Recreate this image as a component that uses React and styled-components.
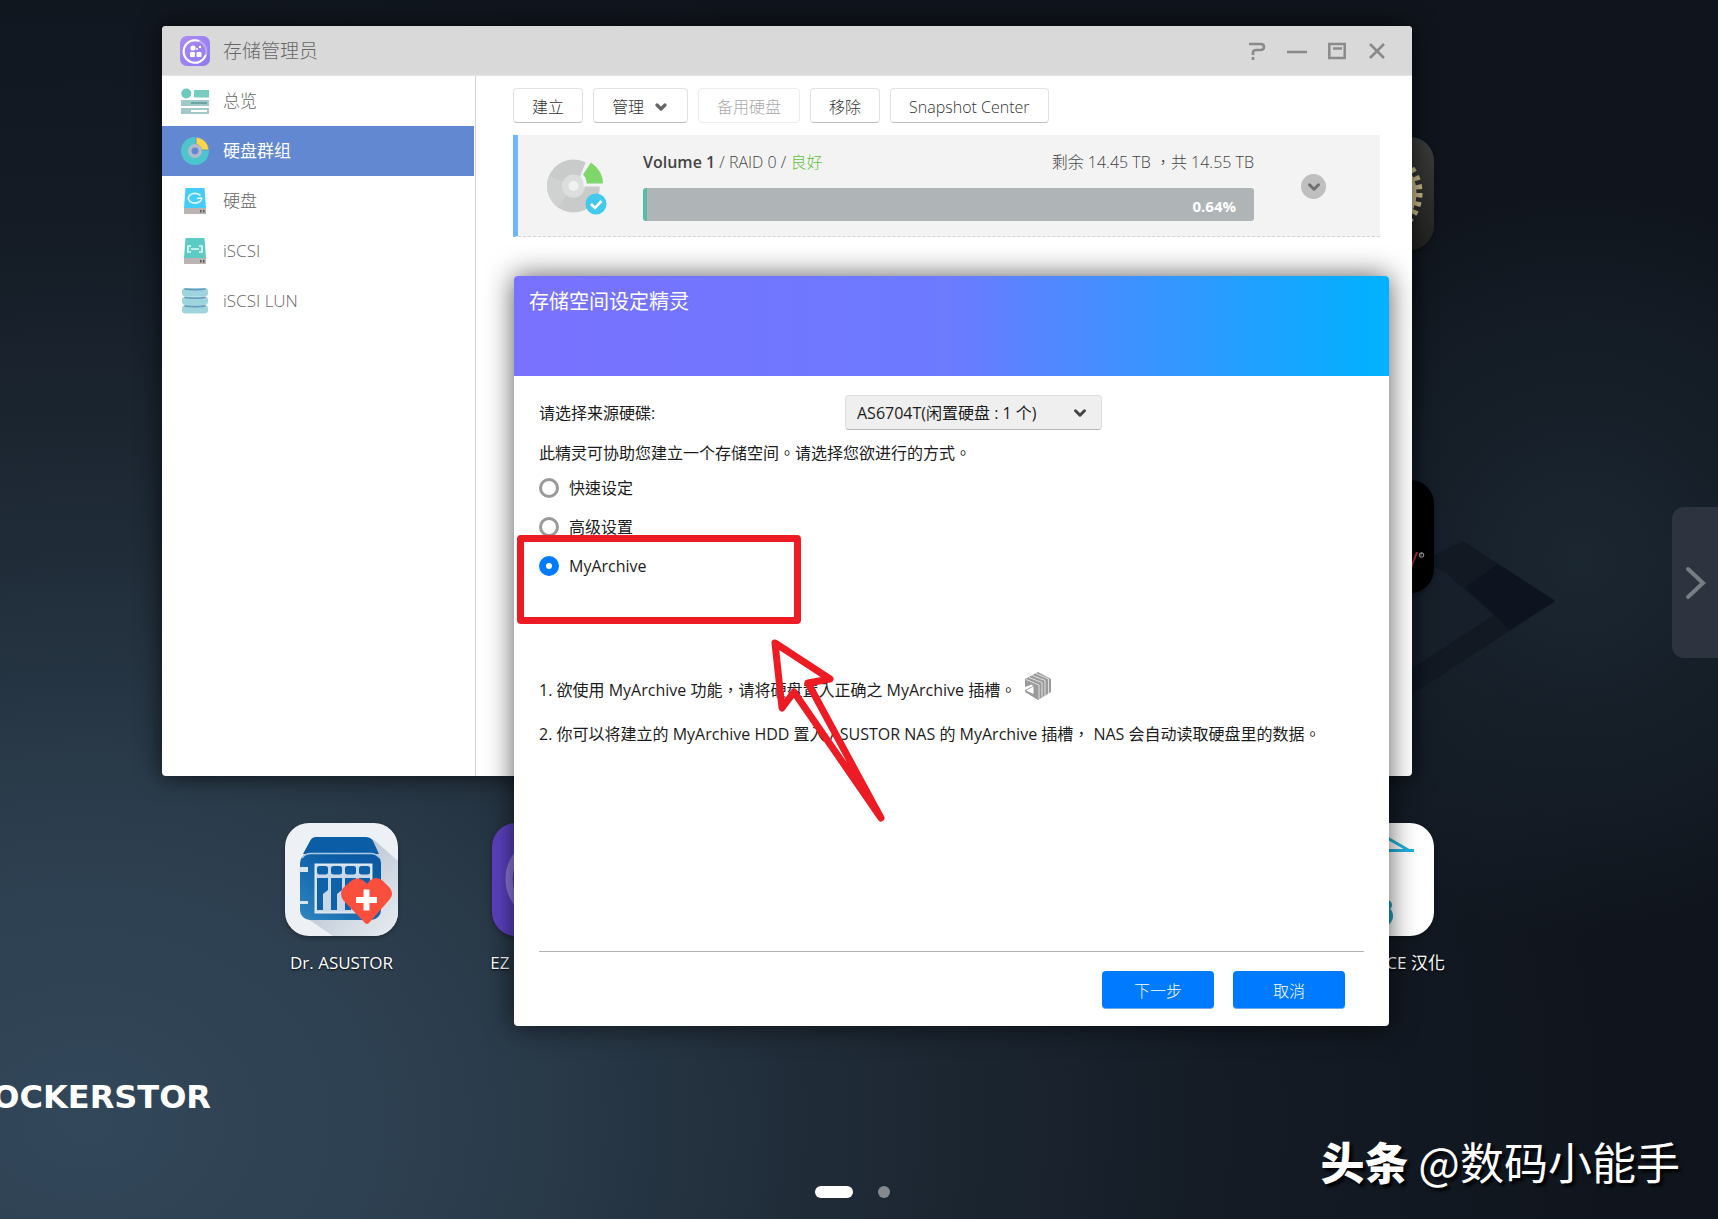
import { useState } from 'react'
import styled, { ThemeProvider, createGlobalStyle, css } from 'styled-components'
import { ChevronDown } from 'lucide-react'

const theme = {
    colors: {
        text: '#1c1c1c',
        muted: '#666',
        line: '#d4d4d4',
        panel: '#f3f3f3',
        active: '#6188d1',
        primary: '#007aff',
        good: '#62c33c',
        mark: '#ed1c24',
    },
    font: '"Open Sans", "Noto Sans CJK TC", sans-serif',
}

const GlobalStyle = createGlobalStyle`
    * {
        box-sizing: border-box;
    }

    body {
        margin: 0;
        font-family: ${({ theme }) => theme.font};
        font-size: 16px;
        line-height: 20px;
        color: ${({ theme }) => theme.colors.text};
    }

    button, select, input {
        font: inherit;
        margin: 0;
    }

    svg {
        display: block;
        flex: none;
    }
`

/* ---------- icons ---------- */

const AppLogo = () => (
    <svg width="30" height="30" viewBox="0 0 30 30">
        <defs>
            <linearGradient id="logoBg" x1="0" y1="0" x2="1" y2="1">
                <stop offset="0" stopColor="#a98cf2" />
                <stop offset="1" stopColor="#9179ee" />
            </linearGradient>
        </defs>
        <rect width="30" height="30" rx="7" fill="url(#logoBg)" />
        <circle cx="15" cy="15.500" r="11.300" fill="none" stroke="#bda9f8" strokeWidth="2" />
        <path d="M18.500 4.800A11.300 11.300 0 1 0 25.500 19.500" fill="none" stroke="#fff" strokeWidth="2" strokeLinecap="round" />
        <rect x="10" y="16" width="5" height="5" rx="1" fill="#fff" />
        <rect x="16.500" y="16" width="5" height="5" rx="1" fill="#fff" />
        <circle cx="13" cy="12" r="2.600" fill="#fff" />
        <circle cx="20" cy="11" r="1.200" fill="#fff" />
        <circle cx="17" cy="13" r="1" fill="#fff" />
    </svg>
)

const OverviewIcon = () => (
    <svg width="28" height="28" viewBox="0 0 28 28">
        <circle cx="5.300" cy="6.500" r="5" fill="#6cc9bb" />
        <rect x="13" y="3" width="15" height="7.500" fill="#76cdc0" />
        <rect x="0" y="13" width="28" height="6" fill="#a3c8c9" />
        <rect x="10" y="15" width="16" height="2" fill="#6ba5a3" />
        <rect x="0" y="21" width="28" height="6" fill="#a3c8c9" />
        <rect x="10" y="23" width="16" height="2" fill="#fff" />
    </svg>
)

const GroupIcon = () => (
    <svg width="28" height="28" viewBox="0 0 28 28">
        <circle cx="14" cy="14" r="9.800" fill="none" stroke="#4cc5cd" strokeWidth="8.400" />
        <path d="M15 0A14 14 0 0 1 28 13H20.500A7 7 0 0 0 15 7.200Z" fill="#ffd54a" stroke="#6188d1" strokeWidth="0.800" />
        <circle cx="14" cy="14" r="5.200" fill="none" stroke="#b3bacb" strokeWidth="3.600" />
    </svg>
)

const DiskIcon = ({ iscsi }) => (
    <svg width="28" height="28" viewBox="0 0 28 28">
        <path d="M4.500 1H23.500L25 21H3Z" fill={iscsi ? '#5bcbc4' : '#45cdf7'} />
        <rect x="3" y="21" width="22" height="6" fill="#b9b4b2" />
        <rect x="19" y="23" width="1.500" height="2.500" fill="#555" />
        <rect x="22" y="23" width="1.500" height="2.500" fill="#555" />
        {iscsi
            ? <path d="M10 9H7V15H10M18 9H21V15H18M10 12H18" fill="none" stroke="#e2fbf8" strokeWidth="1.700" />
            : <path d="M19.500 8.500A6.700 4.800 0 1 0 20.500 12.500V11L16 11.500" fill="none" stroke="#dff6ff" strokeWidth="1.700" />}
    </svg>
)

const LunIcon = () => (
    <svg width="28" height="28" viewBox="0 0 28 28">
        {[1, 9.500, 18].map((y) => (
            <g key={y}>
                <rect x="1" y={y} width="26" height="8.500" rx="3.500" fill="#9dd4dd" />
                <path d={`M3.500 ${y + 1}Q14 ${y + 2.500} 24.500 ${y + 1}`} fill="none" stroke="#6499bb" strokeWidth="1.600" />
            </g>
        ))}
    </svg>
)

const VolumeIcon = () => (
    <svg width="60" height="56" viewBox="0 0 60 56">
        <circle cx="26.500" cy="27" r="26.500" fill="#c9cbca" />
        <path d="M26.500 27L11 48.500A26.500 26.500 0 0 1 2 17Z" fill="#d0d2d1" />
        <circle cx="26.500" cy="27" r="11.500" fill="#dcdddd" />
        <circle cx="26.500" cy="27" r="5" fill="#f1f1f1" />
        <path d="M40 0L60 0V27.500H36.500Q37 21 33 17.500Z" fill="#f3f3f3" />
        <path d="M44 3.500Q56 12 56 24.500H39.500Q40 20 36 15.500Z" fill="#7fd76b" />
        <circle cx="49" cy="45" r="10.500" fill="#43c8ee" />
        <path d="M44 45L48 49L54.500 42" fill="none" stroke="#fff" strokeWidth="2.600" />
    </svg>
)

const SlotIcon = () => (
    <svg width="28" height="28" viewBox="0 0 28 28">
        <path d="M1 7L14 0L27 7V20L14 28L1 20L1 18L9 14L8 12.500L1 15Z" fill="#9b9b9b" />
        <path d="M2 7.500L15 13V27M5 5.500L18 10.500V25M8.500 3.500L21 8.500V23.500M12 1.500L24.500 7V22" fill="none" stroke="#e9e9e9" strokeWidth="0.900" />
        <path d="M2 18.500L9.500 14.500V22Z" fill="#fff" />
    </svg>
)

const NasIcon = () => (
    <svg width="113" height="113" viewBox="0 0 113 113">
        <defs>
            <linearGradient id="nasBody" x1="0" y1="1" x2="1" y2="0">
                <stop offset="0" stopColor="#2f86bf" />
                <stop offset="0.600" stopColor="#0d5fa8" />
                <stop offset="1" stopColor="#0a58a0" />
            </linearGradient>
            <linearGradient id="nasShade" x1="0" y1="0" x2="1" y2="1">
                <stop offset="0.300" stopColor="#b9c5d3" />
                <stop offset="1" stopColor="#e9edf2" />
            </linearGradient>
        </defs>
        <path d="M88 16L113 38V113H48L20 94Z" fill="url(#nasShade)" />
        <path d="M25 18Q27 14 31 14H80Q86 14 88 18L94 31H18Z" fill="#0b5ea6" />
        <rect x="15" y="30" width="81" height="67" rx="10" fill="url(#nasBody)" />
        <path d="M17 35Q20 30.500 26 30.500H86Q91 30.500 95 35" fill="none" stroke="#a9c9e2" strokeWidth="1.600" />
        <rect x="14" y="44" width="9" height="5" fill="#dbe5ee" />
        <rect x="14" y="78" width="9" height="3" fill="#dbe5ee" />
        <rect x="30.500" y="41.500" width="56" height="48" fill="#c9d8e6" stroke="#dfe8f0" strokeWidth="2" />
        {[32, 46, 60, 74].map((x) => (
            <g key={x} fill="#0f62aa">
                <rect x={x} y="43" width="11" height="8.500" rx="2.500" />
                <path d={`M${x} 55H${x + 11}V67L${x + 6} 71V87H${x}Z`} />
            </g>
        ))}
        <path d="M82 61Q86 55 91 55Q95 55 98 58L105 65Q109 71 105 76L84 100Q82 102 80 100L58 77Q54 71 58 65L66 58Q74 52 82 61Z" fill="#fb4f3d" />
        <path d="M81.500 66.500V87.500M71 77H92" stroke="#fff" strokeWidth="6" />
    </svg>
)

const GearIcon = () => (
    <svg width="113" height="113" viewBox="0 0 113 113">
        <circle cx="56" cy="56" r="42" fill="none" stroke="#cdbf91" strokeWidth="7" strokeDasharray="4.400 4.400" />
        <circle cx="56" cy="56" r="35" fill="none" stroke="#cdbf91" strokeWidth="9" />
    </svg>
)

const ArchiveDiskIcon = () => (
    <svg width="113" height="113" viewBox="0 0 113 113">
        <circle cx="56" cy="56" r="39" fill="none" stroke="#8e79da" strokeWidth="7" />
    </svg>
)

const HangerIcon = () => (
    <svg width="113" height="113" viewBox="0 0 113 113">
        <path d="M56 9L88 27.500H25Z" fill="none" stroke="#22b1da" strokeWidth="3" />
        <path d="M84 27.500H93" stroke="#22b1da" strokeWidth="3" />
        <circle cx="66" cy="82" r="5" fill="#1f9dc0" />
        <circle cx="61" cy="93" r="11" fill="#1f9dc0" />
    </svg>
)

const SlashIcon = () => (
    <svg width="113" height="113" viewBox="0 0 113 113">
        <path d="M89 90L96 72" stroke="#d13545" strokeWidth="2" />
        <circle cx="100.500" cy="75" r="2.300" fill="none" stroke="#bbb" />
        <path d="M100 76.500V73.500H101" fill="none" stroke="#bbb" strokeWidth="0.800" />
    </svg>
)

const HelpGlyph = () => (
    <svg width="18" height="18" viewBox="0 0 18 18" fill="none" stroke="#8a8a8a" strokeWidth="2.600">
        <path d="M1 2H12.500Q16 2 16 5Q16 8 12.500 8H8Q5 8 5 10.500V13M5 15V18" />
    </svg>
)

const MinGlyph = () => (
    <svg width="22" height="18" viewBox="0 0 22 18" stroke="#8a8a8a" strokeWidth="2.600">
        <path d="M1 10H21" />
    </svg>
)

const MaxGlyph = () => (
    <svg width="18" height="18" viewBox="0 0 18 18" fill="none" stroke="#8a8a8a" strokeWidth="2.500">
        <path d="M1.300 2H16.700V16H1.300ZM5 6.500H14" />
    </svg>
)

const CloseGlyph = () => (
    <svg width="18" height="18" viewBox="0 0 18 18" stroke="#8a8a8a" strokeWidth="2.600">
        <path d="M2 2L16 16M16 2L2 16" />
    </svg>
)

const NextGlyph = () => (
    <svg width="22" height="34" viewBox="0 0 22 34" fill="none" stroke="#787c84" strokeWidth="4" strokeLinecap="round">
        <path d="M4 3L19 17L4 31" />
    </svg>
)

/* ---------- data ---------- */

const menu = [
    { label: '总览', icon: <OverviewIcon /> },
    { label: '硬盘群组', icon: <GroupIcon /> },
    { label: '硬盘', icon: <DiskIcon /> },
    { label: 'iSCSI', icon: <DiskIcon iscsi /> },
    { label: 'iSCSI LUN', icon: <LunIcon /> },
]

const shortcuts = [
    { col: 6, row: 1, bg: 'linear-gradient(#3c3d3b, #222321)', icon: <GearIcon /> },
    { col: 6, row: 2, bg: '#000', icon: <SlashIcon /> },
    { col: 1, row: 3, bg: '#edf0f5', icon: <NasIcon />, label: 'Dr. ASUSTOR' },
    { col: 2, row: 3, bg: '#5b41c0', icon: <ArchiveDiskIcon />, label: 'EZ', align: 'flex-start' },
    { col: 6, row: 3, bg: '#fff', icon: <HangerIcon />, label: 'CE 汉化', align: 'flex-end' },
]

const modes = ['快速设定', '高级设置', 'MyArchive']

/* ---------- app ---------- */

const StorageManager = () => {
    const [current, setCurrent] = useState('硬盘群组')

    return (
        <ManagerWindow>
            <TitleBar>
                <AppLogo />
                <h1>存储管理员</h1>
                <WindowButton aria-label="帮助"><HelpGlyph /></WindowButton>
                <WindowButton aria-label="最小化"><MinGlyph /></WindowButton>
                <WindowButton aria-label="最大化"><MaxGlyph /></WindowButton>
                <WindowButton aria-label="关闭"><CloseGlyph /></WindowButton>
            </TitleBar>
            <ManagerBody>
                <Sidebar>
                    {menu.map((item) => (
                        <MenuItem key={item.label} $active={item.label === current} onClick={() => setCurrent(item.label)}>
                            {item.icon}
                            {item.label}
                        </MenuItem>
                    ))}
                </Sidebar>
                <Main>
                    <Toolbar>
                        <ToolButton>建立</ToolButton>
                        <ToolButton>管理 <ChevronDown size={16} strokeWidth={5} color="#666" /></ToolButton>
                        <ToolButton disabled>备用硬盘</ToolButton>
                        <ToolButton>移除</ToolButton>
                        <ToolButton>Snapshot Center</ToolButton>
                    </Toolbar>
                    <Volume>
                        <VolumeIcon />
                        <VolumeInfo>
                            <VolumeHead>
                                <span><b>Volume 1</b> / RAID 0 / <em>良好</em></span>
                                <span>剩余 14.45 TB ，共 14.55 TB</span>
                            </VolumeHead>
                            <UsageBar>0.64%</UsageBar>
                        </VolumeInfo>
                        <ExpandButton aria-label="展开"><ChevronDown size={18} strokeWidth={4} /></ExpandButton>
                    </Volume>
                </Main>
            </ManagerBody>
        </ManagerWindow>
    )
}

const Wizard = () => {
    const [mode, setMode] = useState('MyArchive')

    return (
        <WizardWindow>
            <WizardHead>存储空间设定精灵</WizardHead>
            <WizardBody>
                <SourceRow>
                    <label htmlFor="source">请选择来源硬碟:</label>
                    <SelectBox>
                        <select id="source">
                            <option>AS6704T(闲置硬盘 : 1 个)</option>
                        </select>
                        <ChevronDown size={18} strokeWidth={4} />
                    </SelectBox>
                </SourceRow>
                <Intro>此精灵可协助您建立一个存储空间。请选择您欲进行的方式。</Intro>
                <Modes>
                    {modes.map((name) => (
                        <ModeLabel key={name}>
                            <input type="radio" name="mode" checked={mode === name} onChange={() => setMode(name)} />
                            {name}
                        </ModeLabel>
                    ))}
                </Modes>
                <Notes>
                    <li>1. 欲使用 MyArchive 功能，请将硬盘置入正确之 MyArchive 插槽。<SlotIcon /></li>
                    <li>2. 你可以将建立的 MyArchive HDD 置入 ASUSTOR NAS 的 MyArchive 插槽， NAS 会自动读取硬盘里的数据。</li>
                </Notes>
                <WizardFoot>
                    <PrimaryButton>下一步</PrimaryButton>
                    <PrimaryButton>取消</PrimaryButton>
                </WizardFoot>
            </WizardBody>
            <MarkBox />
            <MarkArrow width="120" height="190" viewBox="0 0 120 190">
                <path d="M10 9L65 45L43 49L116 184L29 58L17 74Z" />
            </MarkArrow>
        </WizardWindow>
    )
}

const App = () => {
    return (
        <ThemeProvider theme={theme}>
            <GlobalStyle />
            <Desktop>
                <Wallpaper viewBox="0 0 360 240" width="360" height="240">
                    <path d="M0 40L70 -6L195 74L74 153L0 190Z" fill="#17202a" />
                    <path d="M103 14L195 74L74 153L0 198V175L134 88L86 46L62 34Z" fill="#121923" />
                    <path d="M138 37L195 74L150 103L105 60Z" fill="#0d141f" />
                </Wallpaper>
                <Shortcuts>
                    {shortcuts.map((s) => (
                        <Shortcut key={`${s.col}-${s.row}`} $col={s.col} $row={s.row} $bg={s.bg} $align={s.align}>
                            <i>{s.icon}</i>
                            <span>{s.label}</span>
                        </Shortcut>
                    ))}
                </Shortcuts>
                <BottomBar>
                    <Brand>OCKERSTOR</Brand>
                    <Credit><b>头条</b> @数码小能手</Credit>
                </BottomBar>
                <Pager>
                    <PageDot $current aria-label="1" />
                    <PageDot aria-label="2" />
                </Pager>
                <StorageManager />
                <Wizard />
                <NextPage aria-label="下一页"><NextGlyph /></NextPage>
            </Desktop>
        </ThemeProvider>
    )
}

/* ---------- desktop ---------- */

const Desktop = styled.div`
    position: relative;
    display: flex;
    flex-direction: column;
    min-height: 100vh;
    overflow: hidden;
    background:
        radial-gradient(circle at 92% 46%, rgba(34, 50, 62, 0.6), transparent 22%),
        radial-gradient(ellipse 90% 100% at 5% 92%, #32475a 0%, #2c3e4e 24%, #1f2b37 48%, #141b25 74%, #10151d 100%);
`

const Wallpaper = styled.svg`
    position: absolute;
    top: 527px;
    left: 1360px;
`

const Shortcuts = styled.div`
    position: relative;
    display: grid;
    grid-template-columns: repeat(6, 113px);
    grid-template-rows: repeat(3, 153px);
    justify-content: space-between;
    row-gap: 190px;
    padding: 137px 284px 0 285px;
`

const Shortcut = styled.a.attrs({ href: '#' })`
    grid-column: ${({ $col }) => $col};
    grid-row: ${({ $row }) => $row};
    display: flex;
    flex-direction: column;
    align-items: ${({ $align }) => $align || 'center'};
    gap: 17px;
    color: #fff;
    font-size: 17px;
    text-decoration: none;
    white-space: nowrap;
    text-shadow: 0 1px 2px #000;

    i {
        overflow: hidden;
        height: 113px;
        flex: none;
        border-radius: 24px;
        background: ${({ $bg }) => $bg};
        box-shadow: 0 2px 5px rgba(0, 0, 0, 0.3);
    }

    span {
        margin: 0 ${({ $align }) => ($align === 'flex-end' ? '-11px' : '-2px')};
    }
`

const BottomBar = styled.div`
    display: flex;
    justify-content: space-between;
    margin-top: auto;
    padding: 0 38px 28px 0;
    color: #fff;
`

const Brand = styled.div`
    display: flex;
    justify-content: flex-end;
    width: 211px;
    font: bold 32px/32px "DejaVu Sans", sans-serif;
`

const Credit = styled.div`
    padding-top: 50px;
    font-size: 44px;
    line-height: 60px;
    white-space: nowrap;
    text-shadow: 3px 3px 3px #000;
    font-family: "Noto Sans CJK SC", sans-serif;

    b {
        font-weight: 900;
    }
`

const Pager = styled.nav`
    position: absolute;
    right: 0;
    bottom: 21px;
    left: 0;
    display: flex;
    justify-content: center;
    gap: 25px;
    padding-right: 13px;
`

const PageDot = styled.button`
    width: ${({ $current }) => ($current ? 38 : 12)}px;
    height: 12px;
    padding: 0;
    border: 0;
    border-radius: 6px;
    background: ${({ $current }) => ($current ? '#fff' : '#85888c')};
`

const NextPage = styled.button`
    position: absolute;
    top: 507px;
    right: 0;
    display: flex;
    align-items: center;
    justify-content: center;
    width: 46px;
    height: 151px;
    padding: 0;
    border: 0;
    border-radius: 12px 0 0 12px;
    background: #2e343f;
`

/* ---------- storage manager ---------- */

const windowFrame = css`
    position: absolute;
    display: flex;
    flex-direction: column;
    min-height: 750px;
    border-radius: 4px;
    background: #fff;
    overflow: hidden;
`

const ManagerWindow = styled.section`
    ${windowFrame}
    top: 26px;
    right: 306px;
    left: 162px;
    box-shadow: 0 0 24px rgba(0, 0, 0, 0.7);
`

const TitleBar = styled.header`
    display: flex;
    align-items: center;
    height: 50px;
    padding: 0 20px 0 18px;
    border-bottom: 1px solid #e4e4e4;
    background: #d9d9d9;

    h1 {
        flex: 1;
        margin: 0 0 0 13px;
        color: ${({ theme }) => theme.colors.muted};
        font-size: 19px;
        font-weight: 300;
    }
`

const WindowButton = styled.button`
    display: flex;
    align-items: center;
    justify-content: center;
    width: 30px;
    height: 30px;
    margin-left: 10px;
    padding: 0;
    border: 0;
    background: none;
`

const ManagerBody = styled.div`
    display: flex;
    flex: 1;
`

const Sidebar = styled.nav`
    flex: none;
    width: 314px;
    padding-right: 1px;
    border-right: 1px solid ${({ theme }) => theme.colors.line};
`

const MenuItem = styled.button`
    display: flex;
    align-items: center;
    gap: 14px;
    width: 100%;
    height: 50px;
    padding: 0 19px;
    border: 0;
    background: ${({ $active, theme }) => ($active ? theme.colors.active : 'transparent')};
    color: ${({ $active, theme }) => ($active ? '#fff' : theme.colors.muted)};
    font-size: 17px;
    font-weight: ${({ $active }) => ($active ? 400 : 300)};
`

const Main = styled.main`
    flex: 1;
    min-width: 0;
    padding: 12px 32px 0 37px;
`

const Toolbar = styled.div`
    display: flex;
    gap: 10px;
`

const ToolButton = styled.button`
    display: flex;
    align-items: center;
    gap: 9px;
    height: 35px;
    padding: 2px 18px 0;
    border: 1px solid #e2e2e2;
    border-bottom-color: #bdbdbd;
    border-radius: 4px;
    background: #fff;
    color: #333;
    font-weight: 300;
    white-space: nowrap;

    &:disabled {
        border-color: #ececec;
        color: #aaa;
    }
`

const Volume = styled.article`
    display: flex;
    align-items: center;
    margin-top: 12px;
    height: 102px;
    padding: 2px 54px 0 29px;
    border-bottom: 1px dashed ${({ theme }) => theme.colors.line};
    border-left: 5px solid #6db5ff;
    background: ${({ theme }) => theme.colors.panel};
`

const VolumeInfo = styled.div`
    flex: 1;
    margin-left: 36px;
`

const VolumeHead = styled.div`
    display: flex;
    justify-content: space-between;
    color: #444;
    font-weight: 300;

    b {
        font-weight: 600;
    }

    em {
        color: ${({ theme }) => theme.colors.good};
        font-style: normal;
    }
`

const UsageBar = styled.div`
    display: flex;
    align-items: center;
    justify-content: flex-end;
    height: 33px;
    margin-top: 16px;
    padding: 3px 18px 0 0;
    border-left: 4px solid #55bda8;
    border-radius: 3px;
    background: #afb4b6;
    color: #fff;
    font-size: 15px;
    font-weight: 700;
`

const ExpandButton = styled.button`
    display: flex;
    align-items: center;
    justify-content: center;
    width: 25px;
    height: 25px;
    margin-left: 47px;
    padding: 0;
    border: 0;
    border-radius: 50%;
    background: #bfbfbf;
    color: #707070;
`

/* ---------- wizard ---------- */

const WizardWindow = styled.section`
    ${windowFrame}
    top: 276px;
    right: 329px;
    left: 514px;
    box-shadow: 0 0 28px rgba(0, 0, 0, 0.65);
`

const WizardHead = styled.h2`
    height: 100px;
    margin: 0;
    padding: 16px 15px;
    background: linear-gradient(90deg, #7971ff 0%, #6c7bff 50%, #2e9aff 78%, #00b2ff 100%);
    color: #fff;
    font-size: 20px;
    font-weight: 400;
`

const WizardBody = styled.div`
    display: flex;
    flex: 1;
    flex-direction: column;
    padding: 19px 25px 17px;
`

const SourceRow = styled.div`
    display: flex;
    align-items: center;

    label {
        width: 306px;
    }
`

const SelectBox = styled.div`
    position: relative;

    select {
        appearance: none;
        width: 257px;
        height: 35px;
        padding: 0 36px 0 11px;
        border: 1px solid #dedede;
        border-bottom-color: #b5b5b5;
        border-radius: 4px;
        background: #efefef;
        color: inherit;
    }

    svg {
        position: absolute;
        top: 9px;
        right: 13px;
        color: #444;
        pointer-events: none;
    }
`

const Intro = styled.p`
    margin: 13px 0 15px;
`

const Modes = styled.div`
    display: flex;
    flex-direction: column;
    align-items: flex-start;
    gap: 19px;
`

const ModeLabel = styled.label`
    display: flex;
    align-items: center;
    gap: 10px;

    input {
        appearance: none;
        width: 20px;
        height: 20px;
        border: 3px solid #999;
        border-radius: 50%;
        background: #fff;
    }

    input:checked {
        border: 7px solid ${({ theme }) => theme.colors.primary};
    }
`

const Notes = styled.ul`
    display: flex;
    flex-direction: column;
    gap: 24px;
    margin: 96px 0 0;
    padding: 0;
    list-style: none;
    white-space: nowrap;

    li {
        display: flex;
        align-items: flex-end;
        gap: 8px;
    }
`

const WizardFoot = styled.footer`
    display: flex;
    justify-content: flex-end;
    gap: 19px;
    margin-top: auto;
    padding: 19px 19px 0;
    border-top: 1px solid #b0b4b6;
`

const PrimaryButton = styled.button`
    width: 112px;
    height: 38px;
    padding: 2px 0 0;
    border: 0;
    border-bottom: 1px solid #6fa9e8;
    border-radius: 4px;
    background: ${({ theme }) => theme.colors.primary};
    color: #fff;
    font-weight: 300;
`

const MarkBox = styled.div`
    position: absolute;
    top: 259px;
    left: 3px;
    width: 284px;
    height: 89px;
    border: 7px solid ${({ theme }) => theme.colors.mark};
    border-radius: 4px;
    pointer-events: none;
`

const MarkArrow = styled.svg`
    position: absolute;
    top: 358px;
    left: 251px;
    fill: none;
    stroke: ${({ theme }) => theme.colors.mark};
    stroke-width: 7;
    stroke-linejoin: round;
    pointer-events: none;
`

export default App
